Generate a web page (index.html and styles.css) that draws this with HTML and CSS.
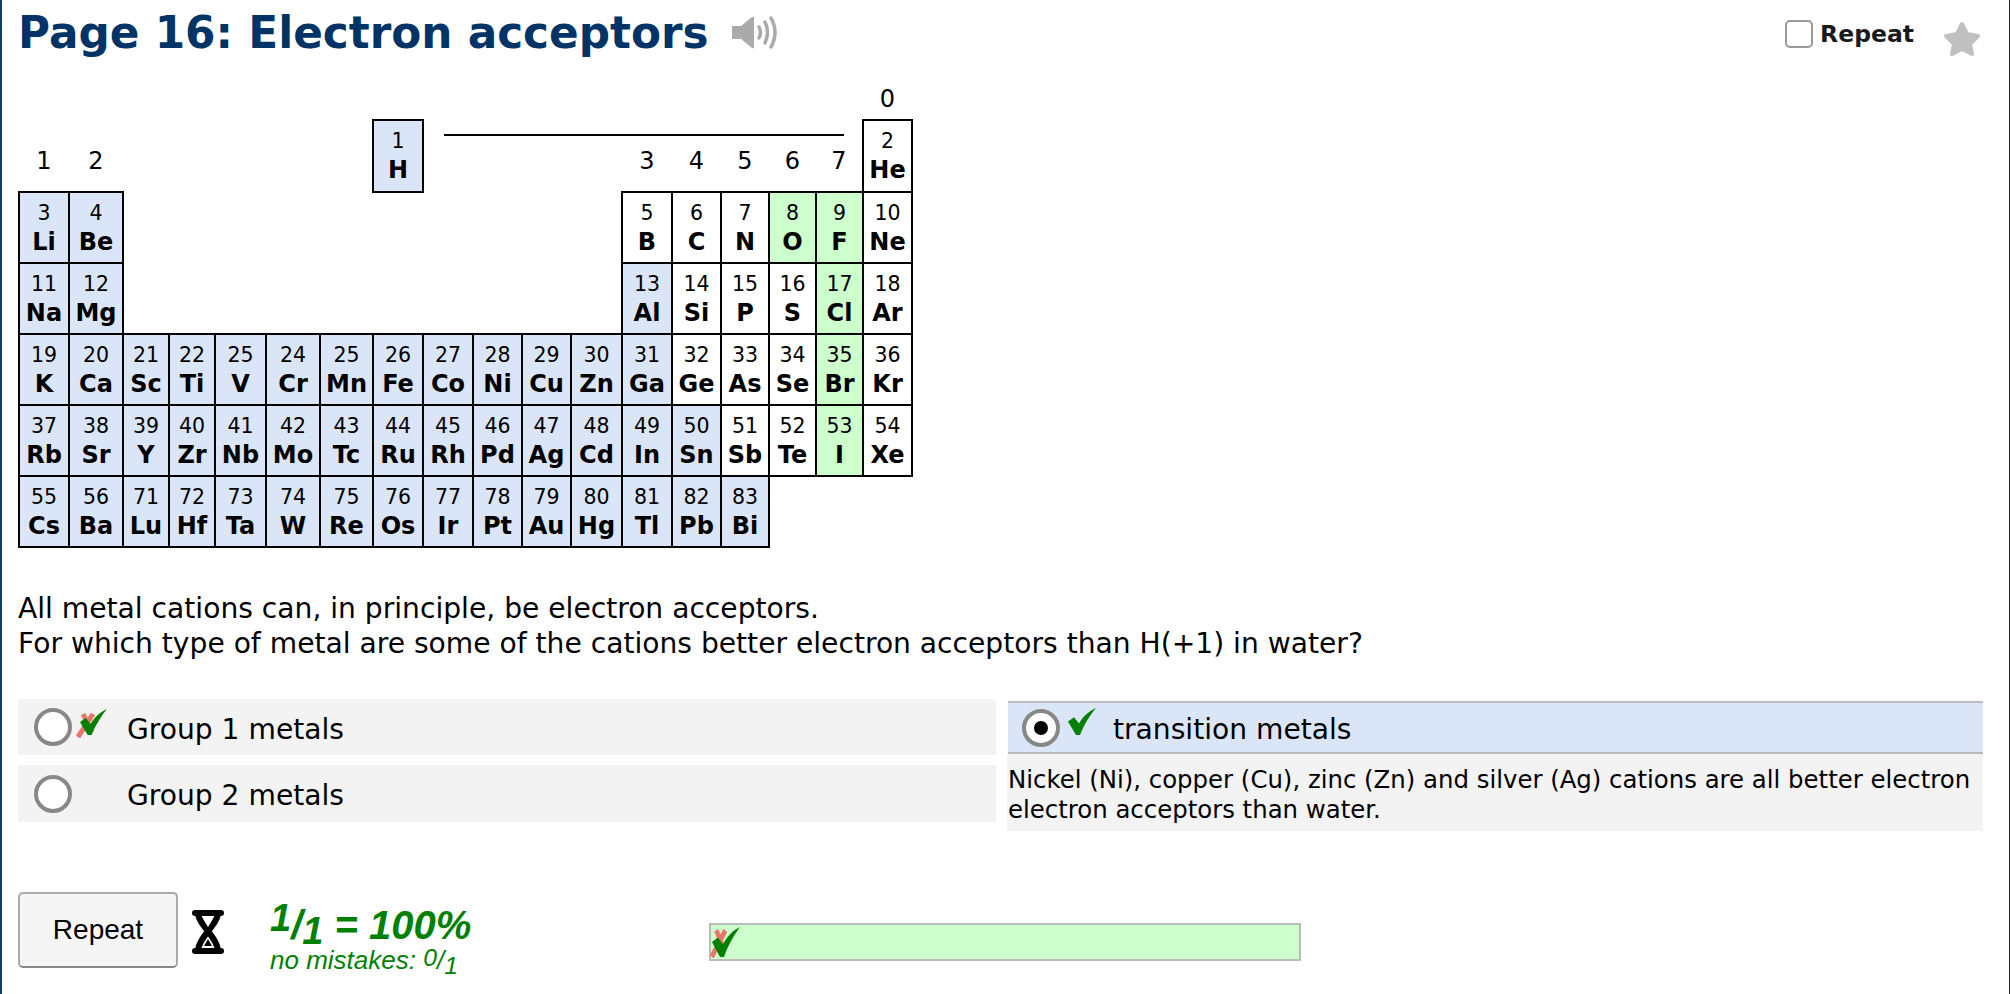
FILE: index.html
```html
<!DOCTYPE html>
<html lang="en">
<head>
    <meta charset="UTF-8">
    <meta name="viewport" content="width=device-width, initial-scale=1.0">
    <title>Page 16: Electron acceptors</title>
    <link rel="stylesheet" href="styles.css">
</head>
<body>
    <svg class="defs" width="0" height="0">
        <symbol id="tick" viewBox="0 0 28 26" preserveAspectRatio="none">
            <path d="M0 13 L6 9 L11 15 C15 8 21 3 28 0 C22 7 16 16 12 26 L8 26 Z" fill="#008000"/>
        </symbol>
        <symbol id="cross" viewBox="0 0 20 26" preserveAspectRatio="none">
            <path d="M2 25 L17 2 M7 2 L16 20" fill="none" stroke="#ea7468" stroke-width="5"/>
        </symbol>
    </svg>

    <div class="page">
        <header class="top">
            <h1>Page 16: Electron acceptors</h1>
            <svg class="speaker" viewBox="0 0 45 33" width="45" height="33">
                <path d="M0 10 H9 L20 1 Q22 0 22 2 V31 Q22 33 20 32 L9 23 H0 Z" fill="#aaa"/>
                <path d="M27 11 Q30 16.500 27 22 M33 6 Q38 16.500 33 27 M39 2 Q47 16.500 39 31" fill="none" stroke="#aaa" stroke-width="3.500" stroke-linecap="round"/>
            </svg>
            <label class="repeat-box"><span class="box"></span>Repeat</label>
            <svg class="star" viewBox="0 0 38 36" width="38" height="36">
                <path d="M19 3 L24 13 L35 15 L27 23 L29 33 L19 28 L9 33 L11 23 L3 15 L14 13 Z" fill="#c0c0c0" stroke="#c0c0c0" stroke-width="4" stroke-linejoin="round"/>
            </svg>
        </header>

        <table class="periodic">
            <colgroup>
                <col class="w50"><col class="w54"><col class="w46"><col class="w46"><col class="w51"><col class="w54"><col class="w53"><col class="w50"><col class="w50">
                <col class="w49"><col class="w49"><col class="w51"><col class="w50"><col class="w49"><col class="w48"><col class="w47"><col class="w47"><col class="w49">
            </colgroup>
            <tr class="head-row"><td colspan="17" class="group-cell"></td><td class="group-cell">0</td></tr>
            <tr class="line-row">
                <td rowspan="2" class="group">1</td>
                <td rowspan="2" class="group">2</td>
                <td rowspan="2" colspan="5" class="blank"></td>
                <td rowspan="2" class="metal">1<b>H</b></td>
                <td colspan="9" class="blank"><div class="group-line"></div></td>
                <td rowspan="2">2<b>He</b></td>
            </tr>
            <tr class="label-row">
                <td colspan="4" class="blank"></td>
                <td class="group">3</td><td class="group">4</td><td class="group">5</td><td class="group">6</td><td class="group">7</td>
            </tr>
            <tr>
                <td class="metal">3<b>Li</b></td><td class="metal">4<b>Be</b></td>
                <td colspan="10" class="blank"></td>
                <td>5<b>B</b></td><td>6<b>C</b></td><td>7<b>N</b></td><td class="halogen">8<b>O</b></td><td class="halogen">9<b>F</b></td><td>10<b>Ne</b></td>
            </tr>
            <tr>
                <td class="metal">11<b>Na</b></td><td class="metal">12<b>Mg</b></td>
                <td colspan="10" class="blank"></td>
                <td class="metal">13<b>Al</b></td><td>14<b>Si</b></td><td>15<b>P</b></td><td>16<b>S</b></td><td class="halogen">17<b>Cl</b></td><td>18<b>Ar</b></td>
            </tr>
            <tr>
                <td class="metal">19<b>K</b></td><td class="metal">20<b>Ca</b></td><td class="metal">21<b>Sc</b></td><td class="metal">22<b>Ti</b></td><td class="metal">25<b>V</b></td><td class="metal">24<b>Cr</b></td><td class="metal">25<b>Mn</b></td><td class="metal">26<b>Fe</b></td><td class="metal">27<b>Co</b></td><td class="metal">28<b>Ni</b></td><td class="metal">29<b>Cu</b></td><td class="metal">30<b>Zn</b></td><td class="metal">31<b>Ga</b></td>
                <td>32<b>Ge</b></td><td>33<b>As</b></td><td>34<b>Se</b></td><td class="halogen">35<b>Br</b></td><td>36<b>Kr</b></td>
            </tr>
            <tr>
                <td class="metal">37<b>Rb</b></td><td class="metal">38<b>Sr</b></td><td class="metal">39<b>Y</b></td><td class="metal">40<b>Zr</b></td><td class="metal">41<b>Nb</b></td><td class="metal">42<b>Mo</b></td><td class="metal">43<b>Tc</b></td><td class="metal">44<b>Ru</b></td><td class="metal">45<b>Rh</b></td><td class="metal">46<b>Pd</b></td><td class="metal">47<b>Ag</b></td><td class="metal">48<b>Cd</b></td><td class="metal">49<b>In</b></td><td class="metal">50<b>Sn</b></td>
                <td>51<b>Sb</b></td><td>52<b>Te</b></td><td class="halogen">53<b>I</b></td><td>54<b>Xe</b></td>
            </tr>
            <tr>
                <td class="metal">55<b>Cs</b></td><td class="metal">56<b>Ba</b></td><td class="metal">71<b>Lu</b></td><td class="metal">72<b>Hf</b></td><td class="metal">73<b>Ta</b></td><td class="metal">74<b>W</b></td><td class="metal">75<b>Re</b></td><td class="metal">76<b>Os</b></td><td class="metal">77<b>Ir</b></td><td class="metal">78<b>Pt</b></td><td class="metal">79<b>Au</b></td><td class="metal">80<b>Hg</b></td><td class="metal">81<b>Tl</b></td><td class="metal">82<b>Pb</b></td><td class="metal">83<b>Bi</b></td>
            </tr>
        </table>

        <p class="question">All metal cations can, in principle, be electron acceptors.<br>For which type of metal are some of the cations better electron acceptors than H(+1) in water?</p>

        <div class="options">
            <div class="col-left">
                <div class="option">
                    <span class="radio"></span>
                    <span class="mark">
                        <svg class="mark-cross"><use href="#cross"/></svg>
                        <svg class="mark-tick"><use href="#tick"/></svg>
                    </span>
                    <span class="label">Group 1 metals</span>
                </div>
                <div class="option">
                    <span class="radio"></span>
                    <span class="mark"></span>
                    <span class="label">Group 2 metals</span>
                </div>
            </div>
            <div class="col-right">
                <div class="option chosen">
                    <span class="radio on"></span>
                    <span class="mark">
                        <svg class="mark-tick"><use href="#tick"/></svg>
                    </span>
                    <span class="label">transition metals</span>
                </div>
                <div class="feedback">Nickel (Ni), copper (Cu), zinc (Zn) and silver (Ag) cations are all better electron electron acceptors than water.</div>
            </div>
        </div>

        <div class="bottom">
            <button class="repeat-btn">Repeat</button>
            <svg class="hourglass" viewBox="0 0 32 44" width="32" height="44">
                <path d="M3 3 H29 M3 41 H29 M6 3 C6 14 26 28 26 41 M26 3 C26 14 6 28 6 41" fill="none" stroke="#000" stroke-width="6" stroke-linecap="round"/>
                <path d="M11 8 H21 L16 17 Z" fill="#fff"/>
                <path d="M12 36 L16 29 L20 36 Z" fill="#000"/>
            </svg>
            <div class="score">
                <div class="score-main"><span class="num">1</span>/<span class="den">1</span> = 100%</div>
                <div class="score-sub">no mistakes: <span class="num">0</span>/<span class="den">1</span></div>
            </div>
            <div class="progress">
                <svg class="mark-cross"><use href="#cross"/></svg>
                <svg class="mark-tick"><use href="#tick"/></svg>
            </div>
        </div>
    </div>
</body>
</html>
```

FILE: styles.css
```css
* {
    box-sizing: border-box;
}

html, body {
    margin: 0;
    height: 100%;
    overflow: hidden;
}

body {
    font-family: "DejaVu Sans", Verdana, sans-serif;
    color: #000;
    background: #fff;
}

.defs {
    position: absolute;
}

.page {
    height: 994px;
    border-left: 2px solid #0a3d70;
    border-right: 1px solid #222;
    padding: 0 25px 0 16px;
}

.top {
    display: flex;
    align-items: center;
    height: 80px;
    padding-bottom: 14px;
}

h1 {
    margin: 0;
    font-size: 43.750px;
    line-height: 64px;
    color: #003366;
}

.speaker {
    margin: -1px 0 0 23px;
}

.repeat-box {
    display: flex;
    align-items: center;
    margin: 2px 0 0 auto;
    font-size: 23.500px;
    font-weight: bold;
    color: #1a1a1a;
}

.box {
    width: 28px;
    height: 28px;
    margin-right: 7px;
    border: 2px solid #999;
    border-radius: 5px;
}

.star {
    margin: 11px 3px 0 29px;
}

/* periodic table */
.periodic {
    border-collapse: collapse;
    table-layout: fixed;
    width: 895px;
    font-size: 20.500px;
    text-align: center;
}

.w46 { width: 46px; }
.w47 { width: 47px; }
.w48 { width: 48px; }
.w49 { width: 49px; }
.w50 { width: 50px; }
.w51 { width: 51px; }
.w53 { width: 53px; }
.w54 { width: 54px; }

.periodic td {
    height: 71px;
    padding: 0 0 1px;
    border: 2px solid #000;
    line-height: 28px;
}

.periodic b {
    display: block;
    margin-top: 1px;
    font-size: 24px;
}

.periodic .blank,
.periodic .group,
.periodic .group-cell {
    border: none;
    padding: 0;
}

.periodic .head-row td {
    height: 39px;
    font-size: 24px;
    line-height: 39px;
    border: none;
}

.periodic .head-row td:last-child {
    border-bottom: 2px solid #000;
}

.periodic .line-row .blank {
    height: 27px;
    vertical-align: top;
}

.periodic .label-row td {
    height: 44px;
}

.periodic .group {
    font-size: 24px;
    line-height: 28px;
    vertical-align: bottom;
    padding-bottom: 16px;
}

.group-line {
    height: 2px;
    margin: 14px 18px 0 20px;
    background: #000;
}

.metal {
    background: #dae5f7;
}

.halogen {
    background: #ccffcc;
}

.question {
    margin: 43px 0 38px;
    font-size: 28.150px;
    line-height: 35px;
}

/* answers */
.options {
    display: grid;
    grid-template-columns: 978px 976px;
    column-gap: 11px;
    font-size: 28.150px;
}

.col-left {
    display: flex;
    flex-direction: column;
    gap: 10px;
}

.col-left .option + .option {
    height: 57px;
}

.col-right {
    padding-top: 2px;
}

.option {
    display: flex;
    align-items: center;
    height: 56px;
    padding-left: 16px;
    background: #f3f3f3;
}

.label {
    padding-top: 4px;
}

.chosen {
    height: 53px;
    margin-left: 1px;
    padding-left: 14px;
    background: #dae5f7;
    border-top: 2px solid #bbb;
    border-bottom: 2px solid #bbb;
}

.radio {
    position: relative;
    flex: none;
    width: 38px;
    height: 38px;
    background: #fff;
    border: 4px solid #888;
    border-radius: 50%;
}

.radio.on::after {
    content: "";
    position: absolute;
    top: 8px;
    left: 8px;
    width: 14px;
    height: 14px;
    background: #000;
    border-radius: 50%;
}

.mark {
    position: relative;
    flex: none;
    width: 55px;
    height: 38px;
}

.chosen .mark {
    width: 53px;
}

.mark-cross,
.mark-tick {
    position: absolute;
}

.mark .mark-cross {
    top: 4px;
    left: 4px;
    width: 20px;
    height: 26px;
}

.mark .mark-tick {
    top: 1px;
    left: 8px;
    width: 27px;
    height: 26px;
}

.chosen .mark .mark-tick {
    top: -1px;
    width: 28px;
    height: 27px;
}

.feedback {
    height: 77px;
    padding: 11px 1px 0;
    font-size: 24.400px;
    line-height: 30px;
    background: #f3f3f3;
}

/* bottom row */
.bottom {
    display: flex;
    margin-top: 61px;
}

.repeat-btn {
    width: 160px;
    height: 76px;
    padding: 0;
    font-family: "Liberation Sans", Arial, sans-serif;
    font-size: 28px;
    color: #000;
    background: #f5f5f5;
    border: 2px solid #aaa;
    border-bottom-color: #888;
    border-radius: 5px;
}

.hourglass {
    margin: 18px 0 0 14px;
}

.score {
    width: 439px;
    margin-left: 46px;
    font-family: "Liberation Sans", Arial, sans-serif;
    font-style: italic;
    color: #008000;
}

.score-main {
    margin-top: 11px;
    font-size: 40px;
    font-weight: bold;
    line-height: 44px;
}

.score-sub {
    margin-top: -1px;
    font-size: 26px;
    line-height: 28px;
}

.score .num,
.score .den {
    font-size: 0.950em;
    line-height: 0;
}

.score-main .num {
    vertical-align: 0.200em;
}

.score-main .den {
    vertical-align: -0.140em;
}

.score-sub .num {
    vertical-align: 0.140em;
}

.score-sub .den {
    vertical-align: -0.200em;
}

.progress {
    position: relative;
    width: 592px;
    height: 38px;
    margin-top: 31px;
    background: #ccffcc;
    border: 2px solid #bbb;
}

.progress .mark-cross {
    top: 3px;
    left: -1px;
    width: 18px;
    height: 30px;
}

.progress .mark-tick {
    top: 2px;
    left: 1px;
    width: 28px;
    height: 30px;
}
```
